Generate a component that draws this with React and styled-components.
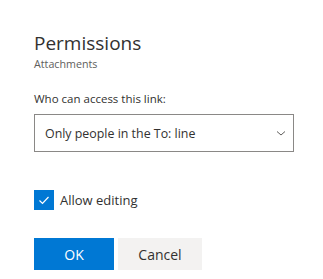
import React, { useState } from 'react';
import styled, { createGlobalStyle } from 'styled-components';

const GlobalStyle = createGlobalStyle`
  html, body {
    margin: 0;
    padding: 0;
    background: #ffffff;
  }
  body {
    font-family: 'Open Sans', 'Noto Sans', sans-serif;
    color: #323130;
  }
`;

const Panel = styled.div`
  width: 323px;
  height: 279px;
  box-sizing: border-box;
  padding: 30px 29px 0 34px;
  display: flex;
  flex-direction: column;
`;

const Title = styled.h1`
  margin: 0;
  font-size: 19px;
  font-weight: 400;
  line-height: 26px;
  color: #323130;
`;

const Subtitle = styled.div`
  margin-top: 1px;
  font-size: 10.7px;
  line-height: 14px;
  color: #605e5c;
`;

const Label = styled.label`
  margin-top: 19px;
  font-size: 11.5px;
  line-height: 18px;
  color: #323130;
`;

const Select = styled.div`
  margin-top: 6px;
  height: 38px;
  box-sizing: border-box;
  border: 1px solid #8a8886;
  display: flex;
  align-items: center;
  justify-content: space-between;
  padding: 0 7px 0 10px;
  font-size: 12.4px;
  color: #323130;
`;

const Chevron = styled.svg`
  width: 10px;
  height: 10px;
  flex-shrink: 0;
`;

const CheckRow = styled.div`
  margin-top: 38px;
  display: flex;
  align-items: center;
  gap: 6px;
  font-size: 13px;
  line-height: 20px;
  cursor: pointer;
`;

const Box = styled.span`
  width: 20px;
  height: 20px;
  box-sizing: border-box;
  background: ${(p) => (p.checked ? '#0078d4' : '#ffffff')};
  border: 1px solid ${(p) => (p.checked ? '#0078d4' : '#323130')};
  display: flex;
  align-items: center;
  justify-content: center;
`;

const Actions = styled.div`
  margin-top: 28px;
  display: flex;
  gap: 4px;
`;

const Button = styled.button`
  height: 32px;
  min-width: ${(p) => p.width}px;
  border: none;
  padding: 0 12px;
  font-family: inherit;
  font-size: 14px;
  background: ${(p) => (p.primary ? '#0078d4' : '#f3f2f1')};
  color: ${(p) => (p.primary ? '#ffffff' : '#323130')};
  cursor: pointer;
`;

const App = () => {
  const [allowEdit, setAllowEdit] = useState(true);

  return (
    <>
      <GlobalStyle />
      <Panel>
        <Title>Permissions</Title>
        <Subtitle>Attachments</Subtitle>
        <Label>Who can access this link:</Label>
        <Select>
          <span>Only people in the To: line</span>
          <Chevron viewBox="0 0 10 10">
            <path d="M1 3.5 L5 7 L9 3.5" fill="none" stroke="#605e5c" strokeWidth="1" />
          </Chevron>
        </Select>
        <CheckRow onClick={() => setAllowEdit(!allowEdit)}>
          <Box checked={allowEdit}>
            {allowEdit && (
              <svg width="12" height="12" viewBox="0 0 12 12">
                <path d="M1.5 6.5 L4.5 9.5 L10.5 3" fill="none" stroke="#ffffff" strokeWidth="1.2" />
              </svg>
            )}
          </Box>
          Allow editing
        </CheckRow>
        <Actions>
          <Button primary width={80}>OK</Button>
          <Button width={84}>Cancel</Button>
        </Actions>
      </Panel>
    </>
  );
};

export default App;
